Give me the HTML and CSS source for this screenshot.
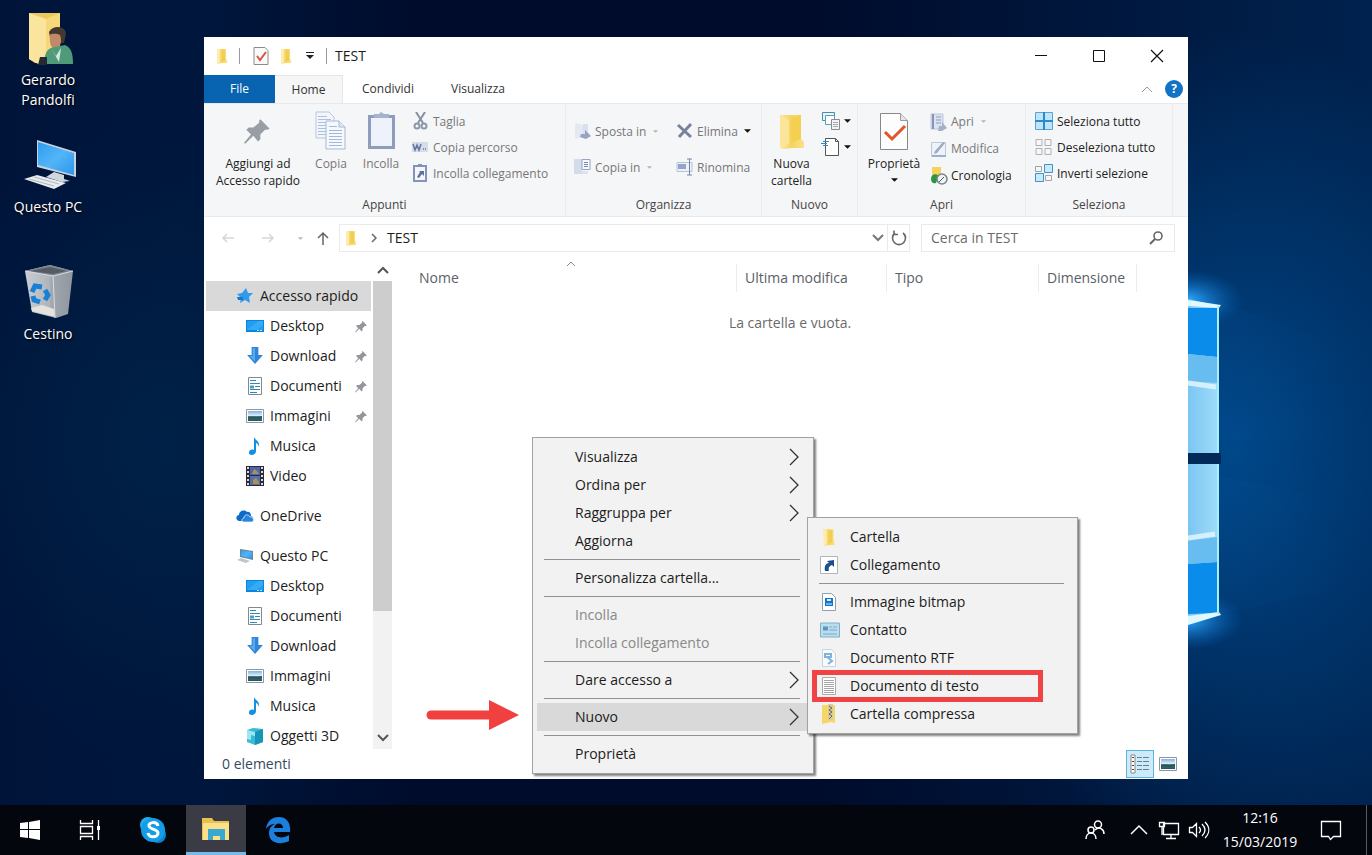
FILE: index.html
```html
<!DOCTYPE html>
<html lang="it">
<head>
<meta charset="utf-8">
<title>TEST</title>
<link rel="stylesheet" href="styles.css">
</head>
<body>
<svg class="sprite" aria-hidden="true">
  <defs>
    <linearGradient id="g-folder" x1="0" x2="1"><stop offset="0" stop-color="#fbe59a"/><stop offset=".5" stop-color="#f6d35f"/><stop offset="1" stop-color="#fae288"/></linearGradient>
    <linearGradient id="g-screen" x1="0" y1="0" x2="1" y2="1"><stop offset="0" stop-color="#2f9bee"/><stop offset=".5" stop-color="#52b5f8"/><stop offset="1" stop-color="#2d96ea"/></linearGradient>
    <linearGradient id="g-sky" x1="0" y1="0" x2="0" y2="1"><stop offset="0" stop-color="#7fb4e6"/><stop offset=".45" stop-color="#dcecf7"/><stop offset=".55" stop-color="#4c7d83"/><stop offset="1" stop-color="#234f74"/></linearGradient>
    <linearGradient id="g-bin" x1="0" x2="1"><stop offset="0" stop-color="#c9cdd3"/><stop offset=".5" stop-color="#b0b5bc"/><stop offset=".55" stop-color="#a2a8b0"/><stop offset="1" stop-color="#8f969f"/></linearGradient>
    <linearGradient id="g-pane" x1="0" x2="1"><stop offset="0" stop-color="#7cc6f2"/><stop offset="1" stop-color="#9fdcfa"/></linearGradient>
  </defs>
  <symbol id="folder" viewBox="0 0 16 16"><path d="M3 1h9v10l1 1v3H8l-4 1z" fill="url(#g-folder)"/><path d="M3 1h3v13l-2 2-1-1z" fill="#fdecae"/><path d="M8 2h3v11H8z" fill="#f3cd52"/></symbol>
  <symbol id="bigfolder" viewBox="0 0 40 40"><path d="M8 4h21v24l3 3v6H20l-9 1-3-2z" fill="url(#g-folder)"/><path d="M8 4l9 5v23l-6 6-3-2z" fill="#fbe59a"/><path d="M19 8l8-4h2v24l-10 4z" fill="#f5d050"/></symbol>
  <symbol id="pin" viewBox="0 0 24 24"><path d="M14 2l8 8-2 1-2 0-4 4 0 4-2 2-4-5-7 7-1-1 6-7-4-4 2-2 4 0 5-4 0-2z" fill="currentColor"/></symbol>
  <symbol id="caret" viewBox="0 0 8 5"><path d="M0 0h8L4 4z" fill="currentColor"/></symbol>
  <symbol id="dash" viewBox="0 0 8 5"><path d="M1 1h6L4 4z" fill="currentColor"/></symbol>
  <symbol id="up" viewBox="0 0 12 8"><path d="M1 7l5-5 5 5" fill="none" stroke="currentColor" stroke-width="2"/></symbol>
  <symbol id="down" viewBox="0 0 12 8"><path d="M1 1l5 5 5-5" fill="none" stroke="currentColor" stroke-width="2"/></symbol>
  <symbol id="more" viewBox="0 0 10 18"><path d="M1 1l8 8-8 8" fill="none" stroke="#333" stroke-width="1.300"/></symbol>
  <symbol id="desk" viewBox="0 0 18 16"><path d="M0 2h18v12H0z" fill="#0a84dc"/><path d="M1 3h16v9H1z" fill="#1f9ff2"/><path d="M1 12L12 3h5v4l-6 5z" fill="#36aaf6"/><path d="M11 12.500h2m1 0h2" stroke="#b9e2ff"/></symbol>
  <symbol id="dl" viewBox="0 0 16 16"><path d="M5 0h6v7h4l-7 8-7-8h4z" fill="#2f86d8"/><path d="M6 1h2v12L3 8h3z" fill="#5aa9ec"/></symbol>
  <symbol id="doc" viewBox="0 0 16 18"><path d="M1.500.5h13v17h-13z" fill="#fff" stroke="#7b8a94"/><path d="M3 3.500h6M3 6.500h10M3 9.500h3M8 9.500h5M3 12.500h10M3 15.500h7" stroke="#3a87ad"/><path d="M3 8.500h4v3H3z" fill="#489fc4"/></symbol>
  <symbol id="img" viewBox="0 0 18 14"><path d="M.5.5h17v13H.5z" fill="#fff" stroke="#8d979f"/><path d="M2 2h14v10H2z" fill="url(#g-sky)"/><path d="M2 8c5-1 7 1 14-1v2c-6 2-9 0-14 1z" fill="#2c5a4c"/></symbol>
  <symbol id="music" viewBox="0 0 16 18"><path d="M7 0c1 3 6 4 5 10-1-3-2-4-3-4v8c0 5-8 5-7 1 0-2 3-3 5-2z" fill="#1490e2"/></symbol>
  <symbol id="video" viewBox="0 0 18 20"><path d="M0 0h18v20H0z" fill="#2b2a3a"/><path d="M4 1h10v8H4z" fill="#4668ae"/><path d="M4 10h10v9H4z" fill="#536fa5"/><path d="M8 3l3 2 2 3H6zM7 14l3-2 3 4v2H7z" fill="#b08e5c"/><path d="M2 1v18M16 1v18" stroke="#ddd" stroke-width="2" stroke-dasharray="2 2"/></symbol>
  <symbol id="cloud" viewBox="0 0 18 12"><path d="M3 11C-1 10 0 5 3 5 3 1 8-1 11 2c3-1 4 2 4 4 3 1 3 5 0 5z" fill="#0f6cc6"/><path d="M7 12c-2-1-1-4 1-4 0-4 5-4 6-1 3-1 5 4 2 5z" fill="#2685de" stroke="#fff" stroke-width=".7"/></symbol>
  <symbol id="pcs" viewBox="0 0 18 16"><path d="M4 1l13 2v9L4 9z" fill="#6d8499"/><path d="M5 2l11 2v7L5 8z" fill="url(#g-screen)"/><path d="M1 12l4-2 9 3-4 2z" fill="#bcc6ce"/></symbol>
  <symbol id="obj" viewBox="0 0 18 18"><path d="M1 3l6-2 10 1v13l-8 3-8-3z" fill="#3bbbd3"/><path d="M9 5l8-3v13l-8 3z" fill="#1595b8"/><path d="M1 3l8 2v4L5 8v5l-4-1z" fill="#9be8f2"/></symbol>
  <symbol id="sheet" viewBox="0 0 16 18"><path d="M1.500.5h13v17h-13z" fill="#fff" stroke="#aaa"/><path d="M3 3.500h10M3 5.500h10M3 7.500h10M3 9.500h10M3 11.500h10M3 13.500h10M3 15.500h10" stroke="#a6a6a6"/></symbol>
  <symbol id="link" viewBox="0 0 18 18"><path d="M.5.5h17v17H.5z" fill="#fff" stroke="#aeb6bf"/><path d="M5 15c-1-5 1-8 4-8L7 5l7-1v7l-2-2c-3 1-4 3-3 6z" fill="#1d4f8f"/></symbol>
  <symbol id="bmp" viewBox="0 0 16 18"><path d="M1.500.5h9l4 4v13h-13z" fill="#fff" stroke="#8e9fae"/><path d="M4 5h8v8H4z" fill="#1874c5"/><path d="M6 6h4v2H6z" fill="#d8ecfb"/><path d="M5 10h6v2H5z" fill="#6fb4e8"/></symbol>
  <symbol id="card" viewBox="0 0 20 15"><path d="M.5.500h19v14H.5z" fill="#b9def0" stroke="#7fb0c8"/><path d="M3 4h5v4H3z" fill="#5c96b8"/><path d="M9 4.500h3m1 0h4M9 7.500h8M3 11.500h14" stroke="#7ea9c0"/></symbol>
  <symbol id="rtf" viewBox="0 0 16 18"><path d="M1.500.5h9l4 4v13h-13z" fill="#f8fbfd" stroke="#c5d5df"/><path d="M4 5h6v3H4zM6 8l5 4-4 3" fill="none" stroke="#7fb3da" stroke-width="2"/></symbol>
  <symbol id="zip" viewBox="0 0 16 20"><path d="M1 1h13v18l-4-1-9 2z" fill="#f5d767"/><path d="M7 0h5v16H7z" fill="#d8cba0"/><path d="M8 2l3 2-3 2 3 2-3 2 3 2-3 3" fill="none" stroke="#6c6754"/></symbol>
</svg>

<main class="desktop">
  <svg class="logo" viewBox="0 0 184 805" aria-hidden="true">
    <defs>
      <radialGradient id="glow"><stop offset="0" stop-color="#2fa8ff"/><stop offset="1" stop-color="#0060b8" stop-opacity="0"/></radialGradient>
      <linearGradient id="ray" x1="0" x2="1"><stop offset="0" stop-color="#0a5aa8" stop-opacity=".5"/><stop offset="1" stop-color="#0a5aa8" stop-opacity="0"/></linearGradient>
    </defs>
    <path d="M0 290L150 345V440L0 440zM0 470L150 500V590L0 620z" fill="url(#ray)" opacity=".3"/>
    <ellipse cx="0" cy="300" rx="56" ry="30" fill="url(#glow)"/>
    <ellipse cx="0" cy="620" rx="56" ry="30" fill="url(#glow)"/>
    <path d="M0 299l31 7v147H0zM0 464h31v150L0 622z" fill="url(#g-pane)"/>
    <path d="M0 308h29v49l-29-3zM0 564l29-2v51L0 614z" fill="#0a8cea"/>
    <path d="M0 354l29 3v26l-29-2zM0 541l29-4v25l-29 2z" fill="#68bdf0"/>
    <path d="M0 383l28 4M0 538l27-4" stroke="#e3f5ff" stroke-width="5" opacity=".85"/>
    <path d="M0 300l33 5-2 3-31-2z M0 616l31-4 2 3-33 10z" fill="#dff7ff"/>
    <path d="M30 306v147M30 464v150" stroke="#a8efff" stroke-width="2"/>
    <path d="M0 453h33v11H0z" fill="#012a58"/>
  </svg>

  <nav class="shortcuts" aria-label="Desktop">
    <a class="shortcut" href="#utente">
      <svg class="shortcut-icon" viewBox="0 0 60 60"><path d="M11 3h31v50H17l-6-4z" fill="#edc75e"/><path d="M11 3l17 6v35l-6 11-11-6z" fill="#fbe49d"/><path d="M28 9l14-6v45H28z" fill="#f6d779"/><path d="M31 22c4-8 17-6 17 2l-2 9H33z" fill="#43382f"/><path d="M32 25c2-2 8-1 10 0 3 8-1 14-5 14s-6-7-5-14z" fill="#c08a68"/><path d="M27 54c-1-11 2-16 10-17l10-2c7 3 8 10 8 19z" fill="#4f9a78"/><path d="M33 38l5 8 5-8-2 14z" fill="#d5e8db"/><path d="M22 47h7v8h-9z" fill="#232a35"/></svg>
      <span>Gerardo<br>Pandolfi</span></a>
    <a class="shortcut" href="#pc">
      <svg class="shortcut-icon" viewBox="0 0 60 60"><path d="M19 3l39 12v25L19 30z" fill="#c6d3de"/><path d="M20 5l36 11v22L20 28z" fill="url(#g-screen)"/><path d="M36 35l10 3v4l6 2-8 1-16-5z" fill="#cfd6dc"/><path d="M6 42l13-4 29 8-12 6z" fill="#e7eaee"/><path d="M11 42l25 7M16 40l25 7" stroke="#aeb7c1"/></svg>
      <span>Questo PC</span></a>
    <a class="shortcut" href="#cestino">
      <svg class="shortcut-icon" viewBox="0 0 60 60"><path d="M7 7l25-6 23 6-5 43-12 4-24-6z" fill="url(#g-bin)"/><path d="M7 7l25-6 23 6-20 5z" fill="#7e858e"/><path d="M12 7l20-4 17 4-14 3z" fill="#555c66"/><path d="M13 44l11-3 12 4 1 8-23-6z" fill="#e6e3df"/><path d="M7 7l28 5 20-5M35 12l2 42" fill="none" stroke="#d9dde2"/><g fill="none" stroke="#1b7fd3" stroke-width="5"><path d="M14 28l3-6 7 1"/><path d="M27 26l3 5-3 5"/><path d="M22 38l-6-2-1-4"/></g></svg>
      <span>Cestino</span></a>
  </nav>

  <section class="window" aria-label="TEST">
    <header class="titlebar">
      <svg class="i16"><use href="#folder"/></svg><i class="tick first"></i>
      <svg class="i18" viewBox="0 0 18 18"><path d="M2 .5h11l3 3v14H2z" fill="#fafafa" stroke="#8b8b8b"/><path d="M5 9l3 4 6-8" fill="none" stroke="#d8563a" stroke-width="2"/></svg>
      <svg class="i16"><use href="#folder"/></svg>
      <svg class="custom" viewBox="0 0 8 8"><path d="M0 .5h8" stroke="#222"/><path d="M0 3h8L4 7z" fill="#222"/></svg>
      <i class="tick"></i><h1 class="title">TEST</h1>
      <div class="controls">
        <button aria-label="Riduci a icona"><svg class="i14" viewBox="0 0 14 14"><path d="M1 6.500h12" stroke="#111"/></svg></button>
        <button aria-label="Ingrandisci"><svg class="i14" viewBox="0 0 14 14"><path d="M1.500 1.500h11v11h-11z" fill="none" stroke="#111"/></svg></button>
        <button aria-label="Chiudi"><svg class="i14" viewBox="0 0 14 14"><path d="M1 1l12 12M13 1L1 13" stroke="#111" stroke-width="1.200"/></svg></button>
      </div>
    </header>

    <div class="tabs">
      <button class="tab file">File</button><button class="tab active">Home</button><button class="tab">Condividi</button><button class="tab">Visualizza</button>
      <div class="tabs-end">
        <button class="collapse" aria-label="Comprimi"><svg class="chev" viewBox="0 0 12 8"><path d="M1 7l5-5 5 5" fill="none" stroke="#999"/></svg></button>
        <button class="help" aria-label="Guida">?</button>
      </div>
    </div>

    <div class="ribbon">
      <section class="group clip">
        <div class="tools">
          <button class="big wide"><span class="art pinart"><svg class="i28"><use href="#pin"/></svg></span>Aggiungi ad<br>Accesso rapido</button>
          <button class="big dim copy"><span class="art"><svg class="i40" viewBox="0 0 40 40"><path d="M5 1h13l5 5v21H5z" fill="#f2f6fc" stroke="#b9c6dc"/><path d="M7 5.500h9M7 8.500h13M7 11.500h13M7 14.500h13M7 17.500h13M7 20.500h13M7 23.500h13" stroke="#aec0dc"/><path d="M15 10h13l6 6v22H15z" fill="#f5f8fd" stroke="#a9b8d2"/><path d="M28 10v6h6" fill="#dde6f3" stroke="#a9b8d2"/><path d="M18 15.500h8M18 19.500h13M18 22.500h13M18 25.500h13M18 28.500h13M18 31.500h13M18 34.500h13" stroke="#a3b7d7"/></svg></span>Copia</button>
          <button class="big dim paste"><span class="art"><svg class="i40" viewBox="0 0 40 40"><path d="M7 4h27v34H7z" fill="#8f9dbd"/><path d="M10 7h21v28H10z" fill="#eef3fb"/><path d="M13 3h5l2-2 3 2h5v4H13z" fill="#a6b3cc"/></svg></span>Incolla</button>
          <div class="rows">
            <button class="row dim"><svg class="i18" viewBox="0 0 18 18"><path d="M4 0l7 11M13 0L6 11" stroke="#8690a2" stroke-width="2"/><circle cx="5" cy="14" r="2.500" fill="none" stroke="#8d97ab" stroke-width="2"/><circle cx="12" cy="14" r="2.500" fill="none" stroke="#8d97ab" stroke-width="2"/></svg>Taglia</button>
            <button class="row dim"><svg class="i18" viewBox="0 0 18 18"><path d="M0 4h16v10H0z" fill="#d5dcec"/><path d="M1 6l2 6 2-5 2 5 2-6M11 11h1m1 0h1" fill="none" stroke="#66749a" stroke-width="1.500"/></svg>Copia percorso</button>
            <button class="row dim"><svg class="i18" viewBox="0 0 18 18"><path d="M2 2h12v15H2z" fill="#f3f6fb" stroke="#8493b7" stroke-width="2"/><path d="M6 0h4v3H6z" fill="#8493b7"/><path d="M5 13l3-5-1-1h5v5l-2-2-3 4z" fill="#5f719c"/></svg>Incolla collegamento</button>
          </div>
        </div>
        <h2>Appunti</h2>
      </section>

      <section class="group organize">
        <div class="tools">
          <div class="rows tall left">
            <button class="row dim"><svg class="i18" viewBox="0 0 18 18"><path d="M1 1l8 2v12l-8 2z" fill="#e3e8f3"/><path d="M9 2h5v12H9z" fill="#d8dfed"/><path d="M7 12h4V8l6 6-5 3-6-2z" fill="#98a5c0"/></svg>Sposta in<svg class="car"><use href="#dash"/></svg></button>
            <button class="row dim"><svg class="i18" viewBox="0 0 18 18"><path d="M0 1h8v15H0z" fill="#d4dcec"/><path d="M8 1.500h8v10H8z" fill="#f5f8fd" stroke="#96a4bf"/><path d="M8 13h6v3H8z" fill="#dde3f0"/><path d="M10 4.500h4M10 6.500h4M10 8.500h4" stroke="#7488b0"/></svg>Copia in<svg class="car"><use href="#dash"/></svg></button>
          </div>
          <div class="rows tall">
            <button class="row dim"><svg class="i18" viewBox="0 0 18 18"><path d="M2 3l13 12M15 2L3 15" stroke="#76839b" stroke-width="3"/></svg>Elimina<svg class="car black"><use href="#caret"/></svg></button>
            <button class="row dim"><svg class="i18" viewBox="0 0 18 18"><path d="M1 4.500h15v9H1z" fill="#edf2fa" stroke="#b9c4d9"/><path d="M2 6h8v5H2z" fill="#94a4c6"/><path d="M11 1h5m-2.500 0v16M11 17h5" stroke="#7486ab" fill="none"/></svg>Rinomina</button>
          </div>
        </div>
        <h2>Organizza</h2>
      </section>

      <section class="group new">
        <div class="tools">
          <button class="big"><span class="art"><svg class="i40"><use href="#bigfolder"/></svg></span>Nuova<br>cartella</button>
          <div class="rows">
            <button class="row" aria-label="Nuovo elemento"><svg class="i20" viewBox="0 0 20 20"><path d="M1.500 1.500h12v8h-12z" fill="#e8f4fa" stroke="#4b8ca5"/><path d="M4.500 4.500h9v9h-9z" fill="#fff" stroke="#5c9bc2"/><path d="M10.500 8.500h8v10h-8z" fill="#f2f2f4" stroke="#8a8a90"/><path d="M12 11.500h5M12 13.500h5M12 15.500h5" stroke="#aaaab2"/></svg><svg class="car black"><use href="#caret"/></svg></button>
            <button class="row" aria-label="Accesso facilitato"><svg class="i20" viewBox="0 0 20 20"><path d="M4.500 1.500h10l3 3v14h-13z" fill="#fff" stroke="#555"/><path d="M14.500 1.500v3h3" fill="none" stroke="#555"/><path d="M2 4.500h6M0 6.500h6M2 8.500h5" stroke="#3a8ac2"/></svg><svg class="car black"><use href="#caret"/></svg></button>
          </div>
        </div>
        <h2>Nuovo</h2>
      </section>

      <section class="group open">
        <div class="tools">
          <button class="big"><span class="art"><svg class="i40" viewBox="0 0 40 40"><path d="M6.500 2.500h20l7 7v29h-27z" fill="#fdfdfd" stroke="#888"/><path d="M26.500 2.500v7h7" fill="#e5e5e5" stroke="#999"/><path d="M11 21l7 7 13-13" fill="none" stroke="#e2552b" stroke-width="3"/></svg></span>Proprietà<svg class="car black"><use href="#caret"/></svg></button>
          <div class="rows">
            <button class="row dim"><svg class="i18" viewBox="0 0 18 18"><path d="M1 1h12v15H1z" fill="#dbe2f0" stroke="#bcc6da"/><path d="M3 1v15" stroke="#8494bb" stroke-width="2"/><path d="M6 4h5M6 7h5M6 10h5" stroke="#8f9dbf"/><path d="M9 13h3v-4l5 6-5 3H8z" fill="#a5b1cb"/></svg>Apri<svg class="car"><use href="#dash"/></svg></button>
            <button class="row dim"><svg class="i18" viewBox="0 0 18 18"><path d="M1.500 2.500h14v14h-14z" fill="#eef3fa" stroke="#bcc8da"/><path d="M15 3L7 13l-3 1 1-3 8-9z" fill="#9aabc5"/><path d="M2 16h14" stroke="#9bafcf" stroke-width="2"/></svg>Modifica</button>
            <button class="row"><svg class="i18" viewBox="0 0 18 18"><path d="M2 0h9v12l-5 2-4-2z" fill="#f6d45c"/><path d="M1 12c0-5 5-6 8-3l-3 7c-3 1-5-1-5-4z" fill="#2d9444"/><circle cx="12" cy="12" r="5" fill="#eef2f2" stroke="#77858a" stroke-width="1.500"/><path d="M9 15l5-5" stroke="#4e5d61"/></svg>Cronologia</button>
          </div>
        </div>
        <h2>Apri</h2>
      </section>

      <section class="group select">
        <div class="tools">
          <div class="rows">
            <button class="row"><svg class="i20" viewBox="0 0 20 20"><path d="M1.500 1.500h17v17h-17z" fill="#bfe5fb" stroke="#5aa5d4"/><path d="M10 1v18M1 10h18" stroke="#2c8cca" stroke-width="2"/></svg>Seleziona tutto</button>
            <button class="row"><svg class="i20" viewBox="0 0 20 20"><path d="M2 2.500h6v6H2zM11 2.500h6v6h-6zM2 11.500h6v6H2zM11 11.500h6v6h-6z" fill="#f7f7f7" stroke="#b0b0b0"/></svg>Deseleziona tutto</button>
            <button class="row"><svg class="i20" viewBox="0 0 20 20"><path d="M1.500 3.500h6v5h-6zM11.500 12.500h6v5h-6z" fill="#f7f7f7" stroke="#a3a3a3"/><path d="M10.500 1.500h8v8h-8zM1.500 10.500h8v8h-8z" fill="#cbe9fb" stroke="#3f93c8"/></svg>Inverti selezione</button>
          </div>
        </div>
        <h2>Seleziona</h2>
      </section>
    </div>

    <div class="locationbar">
      <div class="history">
        <button aria-label="Indietro"><svg class="i14" viewBox="0 0 14 14"><path d="M13 7H2m4-4L2 7l4 4" fill="none" stroke="#d6d6d6" stroke-width="1.500"/></svg></button>
        <button aria-label="Avanti"><svg class="i14" viewBox="0 0 14 14"><path d="M1 7h11M8 3l4 4-4 4" fill="none" stroke="#d6d6d6" stroke-width="1.500"/></svg></button>
        <button class="recent" aria-label="Percorsi recenti"><svg class="car"><use href="#dash"/></svg></button>
        <button aria-label="Su"><svg class="i14" viewBox="0 0 14 14"><path d="M7 14V2M2 7l5-5 5 5" fill="none" stroke="#666" stroke-width="1.500"/></svg></button>
      </div>
      <div class="address">
        <svg class="i16"><use href="#folder"/></svg>
        <svg class="crumb" viewBox="0 0 6 10"><path d="M1 1l4 4-4 4" fill="none" stroke="#666" stroke-width="1.500"/></svg>
        <a href="#test">TEST</a>
        <button class="drop" aria-label="Percorsi precedenti"><svg class="chev grey"><use href="#down"/></svg></button>
        <button class="refresh" aria-label="Aggiorna"><svg class="i18" viewBox="0 0 18 18"><path d="M13 4a6.500 6.500 0 1 1-8 0M4 1.500v4h4" fill="none" stroke="#666" stroke-width="1.600"/></svg></button>
      </div>
      <label class="search"><input type="text" aria-label="Cerca in TEST" placeholder="Cerca in TEST"><svg class="i16" viewBox="0 0 16 16"><circle cx="10" cy="6" r="4" fill="none" stroke="#666" stroke-width="1.600"/><path d="M7 9l-5 5" stroke="#666" stroke-width="2"/></svg></label>
    </div>

    <div class="body">
      <nav class="tree" aria-label="Riquadro di spostamento">
        <a class="root current" href="#rapido"><svg class="i18" viewBox="0 0 18 18"><path d="M10 1l2 5h5l-4 4 1 6-5-3-5 3 1-5-4-4 5-1z" fill="#2f9bea"/><path d="M1 10h6v3H2z" fill="#1877c8"/></svg>Accesso rapido</a>
        <a href="#desktop"><svg class="i18"><use href="#desk"/></svg>Desktop<svg class="pin"><use href="#pin"/></svg></a>
        <a href="#download"><svg class="i18"><use href="#dl"/></svg>Download<svg class="pin"><use href="#pin"/></svg></a>
        <a href="#documenti"><svg class="i18"><use href="#doc"/></svg>Documenti<svg class="pin"><use href="#pin"/></svg></a>
        <a href="#immagini"><svg class="i18"><use href="#img"/></svg>Immagini<svg class="pin"><use href="#pin"/></svg></a>
        <a href="#musica"><svg class="i18"><use href="#music"/></svg>Musica</a>
        <a href="#video"><svg class="i20v"><use href="#video"/></svg>Video</a>
        <a class="root spaced" href="#onedrive"><svg class="i18"><use href="#cloud"/></svg>OneDrive</a>
        <a class="root spaced" href="#pc"><svg class="i18"><use href="#pcs"/></svg>Questo PC</a>
        <a href="#desktop"><svg class="i18"><use href="#desk"/></svg>Desktop</a>
        <a href="#documenti"><svg class="i18"><use href="#doc"/></svg>Documenti</a>
        <a href="#download"><svg class="i18"><use href="#dl"/></svg>Download</a>
        <a href="#immagini"><svg class="i18"><use href="#img"/></svg>Immagini</a>
        <a href="#musica"><svg class="i18"><use href="#music"/></svg>Musica</a>
        <a href="#oggetti"><svg class="i18"><use href="#obj"/></svg>Oggetti 3D</a>
      </nav>
      <div class="scrollbar">
        <button aria-label="Scorri su"><svg class="chev"><use href="#up"/></svg></button>
        <div class="track"><div class="thumb"></div></div>
        <button aria-label="Scorri giù"><svg class="chev"><use href="#down"/></svg></button>
      </div>
      <table class="files">
        <colgroup><col><col class="c-date"><col class="c-type"><col class="c-size"><col class="c-rest"></colgroup>
        <thead><tr><th>Nome<svg class="sort" viewBox="0 0 12 8"><path d="M2 6l4-4 4 4" fill="none" stroke="#888"/></svg></th><th>Ultima modifica</th><th>Tipo</th><th>Dimensione</th><td></td></tr></thead>
        <tbody><tr><td class="empty" colspan="5">La cartella e vuota.</td></tr></tbody>
      </table>
    </div>

    <footer class="status"><span>0 elementi</span>
      <div class="views">
        <button class="on" aria-label="Dettagli"><svg class="i20" viewBox="0 0 20 20"><path d="M1 1h4v18H1z" fill="#fff" stroke="#888"/><path d="M7 3.500h5m1 0h6M7 7.500h5m1 0h6M7 11.500h5m1 0h6M7 15.500h5m1 0h6" stroke="#5f8391"/><path d="M2 3.500h2M2 7.500h2M2 11.500h2M2 15.500h2" stroke="#733"/></svg></button>
        <button aria-label="Icone grandi"><svg class="i18"><use href="#img"/></svg></button>
      </div>
    </footer>
  </section>

  <svg class="arrow" viewBox="0 0 94 32" aria-hidden="true"><path d="M5 16h62" stroke="#f04040" stroke-width="9" stroke-linecap="round"/><path d="M63 1l30 15-30 15z" fill="#f04040"/></svg>

  <div class="menu context">
    <button>Visualizza<svg class="more"><use href="#more"/></svg></button>
    <button>Ordina per<svg class="more"><use href="#more"/></svg></button>
    <button>Raggruppa per<svg class="more"><use href="#more"/></svg></button>
    <button>Aggiorna</button>
    <hr>
    <button>Personalizza cartella...</button>
    <hr>
    <button disabled>Incolla</button>
    <button disabled>Incolla collegamento</button>
    <hr>
    <button>Dare accesso a<svg class="more"><use href="#more"/></svg></button>
    <hr>
    <button class="hover">Nuovo<svg class="more"><use href="#more"/></svg></button>
    <hr>
    <button>Proprietà</button>
  </div>

  <div class="menu submenu">
    <button><svg class="i18"><use href="#folder"/></svg>Cartella</button>
    <button><svg class="i18"><use href="#link"/></svg>Collegamento</button>
    <hr>
    <button><svg class="i18"><use href="#bmp"/></svg>Immagine bitmap</button>
    <button><svg class="i20"><use href="#card"/></svg>Contatto</button>
    <button><svg class="i18"><use href="#rtf"/></svg>Documento RTF</button>
    <button class="marked"><svg class="i18"><use href="#sheet"/></svg>Documento di testo</button>
    <button><svg class="i20v"><use href="#zip"/></svg>Cartella compressa</button>
  </div>
</main>

<footer class="taskbar">
  <button class="app" aria-label="Start"><svg class="i20" viewBox="0 0 20 20"><path d="M0 3l8-1v7H0zM9 2l11-2v9H9zM0 10h8v8l-8-1zM9 10h11v10L9 18z" fill="#fff"/></svg></button>
  <button class="app" aria-label="Visualizzazione attività"><svg class="i22" viewBox="0 0 22 22"><path d="M1.500 1v3.500h12V1M1.500 7.500h12v7h-12zM1.500 21v-3.500h12V21M19.500 1v20" fill="none" stroke="#fff" stroke-width="1.300"/><path d="M18 7h3v4h-3z" fill="#fff"/></svg></button>
  <button class="app skype" aria-label="Skype"><svg class="i28" viewBox="0 0 28 28"><circle cx="9" cy="9" r="8" fill="#1caef0"/><circle cx="19" cy="19" r="8" fill="#0d83d4"/><circle cx="14" cy="14" r="12" fill="#139de6"/><path d="M19 10c-1-5-10-4-9 0 1 4 9 3 9 7 0 5-9 5-10 0" fill="none" stroke="#fff" stroke-width="3"/></svg></button>
  <button class="app running" aria-label="Esplora file"><svg class="i28" viewBox="0 0 28 28"><path d="M0 3h10l2 3h15v19H0z" fill="#e9bf4e"/><path d="M1 8h26v17H1z" fill="#fbe08a"/><path d="M6 14h17v11h-5v-4h-7v4H6z" fill="#39a9d2"/></svg></button>
  <button class="app edge" aria-label="Microsoft Edge"><svg class="i28" viewBox="0 0 28 28"><path d="M2 13C3 5 8 1 15 1c7 0 12 5 11 15H10c1 6 9 7 15 3v6c-8 4-20 3-20-8 0-5 3-8 6-9-4 0-7 2-9 5zm8-1h9c0-6-8-6-9 0z" fill="#1c7fdc"/></svg></button>
  <div class="tray">
    <button class="people" aria-label="Contatti"><svg class="i20" viewBox="0 0 20 20"><g fill="none" stroke="#fff" stroke-width="1.500"><circle cx="13" cy="4.500" r="3.500"/><circle cx="6" cy="10" r="3"/><path d="M1 19c0-8 10-8 10 0M10 10c4-4 9-1 9 4"/></g></svg></button>
    <button aria-label="Icone nascoste"><svg class="i18" viewBox="0 0 18 18"><path d="M1 13l8-8 8 8" fill="none" stroke="#fff" stroke-width="1.500"/></svg></button>
    <button aria-label="Rete"><svg class="i22" viewBox="0 0 22 22"><path d="M5.500 4.500h15v11h-15zM13 16v3M8 19.500h10M1.500 3.500h5v4h-5zM4 8v8" fill="none" stroke="#fff" stroke-width="1.300"/></svg></button>
    <button aria-label="Volume"><svg class="i22" viewBox="0 0 22 22"><path d="M1.500 8.500h3l4-4v13l-4-4h-3zM11 8c2 2 2 4 0 6M14 5c4 4 4 8 0 12M17 3c5 5 5 11 0 16" fill="none" stroke="#fff" stroke-width="1.300"/></svg></button>
    <time class="clock" datetime="2019-03-15T12:16">12:16<br>15/03/2019</time>
    <button class="notes" aria-label="Notifiche"><svg class="i22" viewBox="0 0 22 22"><path d="M1.500 2.500h19v15h-7l-3 3-2-3h-7z" fill="none" stroke="#fff" stroke-width="1.300"/></svg></button>
    <i class="peek"></i>
  </div>
</footer>
</body>
</html>
```

FILE: styles.css
```css
* { box-sizing: border-box; }
body {
  margin: 0;
  height: 100vh;
  display: flex;
  flex-direction: column;
  overflow: hidden;
  font: 14px/20px "Open Sans", "Noto Sans", sans-serif;
  color: #1c1c1c;
}
button {
  border: 0;
  padding: 0;
  margin: 0;
  background: none;
  font: inherit;
  color: inherit;
  display: flex;
  align-items: center;
  text-align: left;
}
a { color: inherit; text-decoration: none; }
h1, h2 { margin: 0; font-weight: 400; }
svg { display: block; flex: none; }
.sprite { position: absolute; width: 0; height: 0; }
.i14 { width: 14px; height: 14px; }
.i16 { width: 16px; height: 16px; }
.i18 { width: 18px; height: 18px; }
.i20 { width: 20px; height: 20px; }
.i20v { width: 18px; height: 20px; }
.i22 { width: 22px; height: 22px; }
.i28 { width: 28px; height: 28px; }
.i40 { width: 40px; height: 40px; }
.chev { width: 12px; height: 8px; color: #555; }
.chev.grey { color: #777; }
.car { width: 7px; height: 5px; color: #b4b4b4; }
.car.black { color: #111; }

/* Desktop */
.desktop {
  position: relative;
  flex: 1;
  min-height: 0;
  background:
    radial-gradient(ellipse 300px 420px at 90% 56%, #00488a, rgba(0, 66, 128, 0) 100%),
    radial-gradient(ellipse 260px 320px at 12% 55%, rgba(0, 36, 74, .8), rgba(0, 36, 74, 0) 100%),
    linear-gradient(90deg, #00143a, #00163c 15%, #000c2c 30%, #000c2c 60%, #00224e);
}
.logo { position: absolute; right: 0; top: 0; width: 184px; height: 100%; }
.shortcuts { padding: 10px 0; width: 96px; color: #fff; }
.shortcut { display: flex; flex-direction: column; align-items: center; height: 127px; text-align: center; text-shadow: 1px 1px 2px #000; }
.shortcut-icon { width: 60px; height: 60px; }

/* Explorer window */
.window {
  position: absolute;
  inset: 37px 184px 26px 204px;
  background: #fff;
  display: grid;
  grid-template-rows: 38px 28px 114px 42px minmax(0, 1fr) 30px;
}
.titlebar { display: flex; align-items: center; gap: 8px; padding-left: 10px; }
.tick { width: 1px; height: 16px; background: #999; }
.tick.first { margin: 0 4px 0 1px; }
.custom { width: 8px; height: 8px; margin: 0 4px; }
.title { font-size: 14px; }
.controls { display: flex; margin-left: auto; padding-right: 2px; }
.controls button { width: 58px; height: 38px; justify-content: center; }

.tabs { display: flex; font-size: 12px; color: #333; }
.tab { justify-content: center; width: 90px; }
.tab.file { width: 71px; background: #0863b1; color: #fff; }
.tab.active { width: 68px; background: #f6f6f7; border-top: 1px solid #e6e6e6; border-right: 1px solid #e6e6e6; }
.tabs-end { display: flex; align-items: center; margin-left: auto; padding-right: 5px; gap: 12px; }
.help { width: 18px; height: 18px; border-radius: 50%; background: #1272c4; color: #fff; font-weight: 700; justify-content: center; }

.ribbon { display: flex; background: #f5f6f7; border: solid #e8e9ea; border-width: 1px 0; font-size: 12px; line-height: 17px; color: #222; }
.group { display: flex; flex-direction: column; border-right: 1px solid #ebeced; padding: 4px 0 1px; }
.group h2 { font-size: 12px; text-align: center; line-height: 20px; color: #444; }
.tools { display: flex; flex: 1; align-items: flex-start; white-space: nowrap; }
.clip { width: 362px; }
.organize { width: 196px; }
.new { width: 96px; }
.open { width: 168px; }
.select { width: 147px; }
.dim { color: #777; }
.big { display: block; width: 60px; padding-top: 3px; text-align: center; }
.big .art { display: flex; justify-content: center; align-items: center; height: 40px; margin-bottom: 4px; }
.big .car { margin: 6px auto 0; }
.big.wide { width: 108px; }
.big.copy { width: 38px; }
.big.paste { width: 62px; }
.pinart { color: #999ea4; }
.rows { display: flex; flex-direction: column; }
.row { gap: 3px; height: 26px; }
.row .car { margin-left: 3px; }
.tall { padding-top: 5px; }
.tall .row { height: 36px; }
.tall.left { width: 102px; }
.organize .tools { padding-left: 8px; }
.new .row { gap: 0; }
.new .big { width: 59px; }
.open .big { width: 72px; }
.open .row { height: 27px; }
.select .tools { padding-left: 8px; }

.locationbar { display: flex; align-items: center; padding: 0 13px 0 17px; }
.history { display: flex; gap: 26px; width: 118px; }
.history .recent { margin: 0 -14px 0 -4px; }
.address { display: flex; flex: 1; align-items: center; height: 28px; border: 1px solid #eaeaea; padding-left: 3px; }
.crumb { width: 6px; height: 10px; margin: 0 10px 0 12px; }
.drop { margin-left: auto; padding-right: 3px; }
.refresh { width: 22px; justify-content: center; height: 26px; border-left: 1px solid #eaeaea; }
.search { display: flex; align-items: center; width: 254px; height: 28px; margin-left: 11px; border: 1px solid #eaeaea; padding: 0 10px 0 9px; }
.search input { flex: 1; min-width: 0; border: 0; padding: 0; outline: 0; background: none; font: inherit; }
.search input::placeholder { color: #6b6b6b; opacity: 1; }

.body { display: grid; grid-template-columns: 169px 19px minmax(0, 1fr); min-height: 0; }
.tree { padding: 22px 2px 0; overflow: hidden; }
.tree a { display: flex; align-items: center; gap: 6px; height: 30px; padding-left: 40px; white-space: nowrap; }
.tree .root { padding-left: 30px; }
.tree .current { background: #d9d9d9; }
.tree .spaced { margin-top: 10px; }
.tree .pin { width: 13px; height: 13px; margin: 0 3px 0 auto; color: #93979c; }
.scrollbar { display: flex; flex-direction: column; background: #f2f2f2; }
.scrollbar button { height: 22px; justify-content: center; background: #fff; }
.scrollbar button:last-child { background: #f2f2f2; }
.track { flex: 1; }
.thumb { height: 74%; background: #cdcdcd; }

.files { width: 100%; height: 80px; table-layout: fixed; border-collapse: collapse; color: #5a6068; }
.c-date { width: 150px; }
.c-type { width: 152px; }
.c-size { width: 98px; }
.c-rest { width: 51px; }
.files th { position: relative; text-align: left; font-weight: 400; padding: 0 0 0 8px; height: 38px; background: linear-gradient(#ececec, #ececec) right center / 1px 28px no-repeat; }
.files th:first-child { padding-left: 27px; }
.sort { position: absolute; top: 1px; left: 50%; width: 12px; height: 8px; }
.empty { text-align: center; padding: 10px 0 0; color: #6b6b6b; }
.status { display: flex; align-items: center; padding: 0 11px 0 18px; color: #34495e; }
.views { display: flex; align-items: center; gap: 5px; margin-left: auto; }
.views .on { width: 28px; height: 28px; justify-content: center; background: #cdeafa; border: 1px solid #5fb4dc; }

/* Menus */
.menu { position: absolute; background: #f2f2f2; border: 1px solid #a2a2a2; padding: 5px 4px; box-shadow: 2px 2px 2px rgba(0, 0, 0, .5); }
.menu button { width: 100%; height: 28px; white-space: nowrap; }
.menu button:disabled { color: #888; }
.menu hr { height: 1px; border: 0; background: #919191; margin: 4px 9px 4px 7px; }
.context { left: 532px; top: 437px; width: 282px; }
.context button { padding: 0 10px 0 38px; }
.context .hover { background: #d9d9d9; }
.more { width: 10px; height: 18px; margin-left: auto; }
.submenu { left: 807px; top: 517px; width: 271px; }
.submenu button { display: grid; grid-template-columns: 20px 1fr; gap: 10px; align-items: center; padding-left: 8px; }
.submenu .marked { position: relative; }
.submenu .marked::after { content: ""; position: absolute; inset: -2px 30px -2px 0; border: 5px solid #f04444; }
.arrow { position: absolute; left: 426px; top: 699px; width: 94px; height: 32px; }

/* Taskbar */
.taskbar { display: flex; height: 50px; background: #04060e; color: #fff; }
.app { width: 60px; justify-content: center; }
.skype { width: 66px; }
.edge { width: 64px; }
.running { background: #3b3b46; border-bottom: 3px solid #76b9ed; }
.tray { display: flex; align-items: center; margin-left: auto; }
.tray button { width: 30px; justify-content: center; }
.tray .people { width: 58px; }
.clock { width: 92px; text-align: center; line-height: 24px; }
.tray .notes { width: 50px; }
.peek { width: 1px; height: 50px; margin: 0 5px 0 10px; background: #555b66; }
```
